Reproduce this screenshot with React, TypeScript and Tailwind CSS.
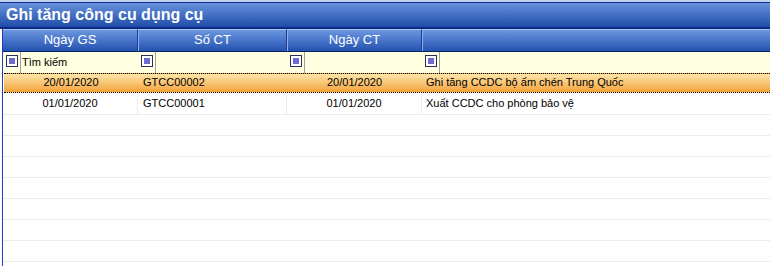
const rows = [
  { ngayGs: '20/01/2020', soCt: 'GTCC00002', ngayCt: '20/01/2020', dienGiai: 'Ghi tăng CCDC bộ ấm chén Trung Quốc' },
  { ngayGs: '01/01/2020', soCt: 'GTCC00001', ngayCt: '01/01/2020', dienGiai: 'Xuất CCDC cho phòng bảo vệ' },
];

function FilterBox() {
  return (
    <span className="flex h-[12px] w-[12px] shrink-0 items-center justify-center border border-[#2e2e5c] bg-white">
      <span className="h-[6px] w-[6px] bg-[#6b6bd2]" />
    </span>
  );
}

function FilterCell({ width, label }: { width?: string; label?: string }) {
  return (
    <div className={`flex h-full items-center ${width ?? 'flex-1'}`}>
      <div className="flex h-full items-center pl-[3px] pr-[2px] pb-[3px]">
        <FilterBox />
      </div>
      <div className="h-full border-l border-[#a0a0a0]" />
      <span className="pl-[1px] pb-[1px]">{label}</span>
    </div>
  );
}

export default function App() {
  return (
    <div className="h-[266px] w-[770px] overflow-hidden bg-white font-['Liberation_Sans',Arial,sans-serif] text-[11px] text-black">
      {/* Title bar */}
      <div className="bg-[#c3d1ee] pt-[2px]">
        <div className="flex h-[27px] items-center border-t border-b-2 border-t-[#0d2f8e] border-b-[#0a2a86] bg-linear-to-b from-[#6892dd] to-[#1f4ca8] pl-[6px] pb-[1px]">
          <span className="text-[16px] font-bold leading-none text-white">Ghi tăng công cụ dụng cụ</span>
        </div>
      </div>

      {/* Grid */}
      <div className="ml-[2px] h-full border-l border-[#1d3fc4]">
        {/* Column headers */}
        <div className="flex h-[23px] border-b border-[#0c2162] bg-linear-to-b from-[#6f99e2] to-[#2352b0] text-[13px] text-white">
          <div className="flex w-[135px] items-center justify-center border-t border-r border-t-[#a9c3f0] border-r-[#1b3a8c] pb-[1px]">Ngày GS</div>
          <div className="flex w-[149px] items-center justify-center border-t border-r border-l border-t-[#a9c3f0] border-r-[#1b3a8c] border-l-[#8fb0ea] pb-[1px]">Số CT</div>
          <div className="flex w-[135px] items-center justify-center border-t border-r border-l border-t-[#a9c3f0] border-r-[#1b3a8c] border-l-[#8fb0ea] pb-[1px]">Ngày CT</div>
          <div className="flex-1 border-t border-l border-t-[#a9c3f0] border-l-[#8fb0ea]" />
        </div>

        {/* Filter row */}
        <div className="flex h-[21px] bg-[#ffffe1]">
          <FilterCell width="w-[135px]" label="Tìm kiếm" />
          <FilterCell width="w-[149px]" />
          <FilterCell width="w-[135px]" />
          <FilterCell />
        </div>

        {/* Data rows */}
        {rows.map((r, i) => (
          <div
            key={r.soCt}
            className={
              i === 0
                ? 'ml-[1px] flex h-[20px] items-center border-y border-dotted border-black bg-linear-to-b from-[#fde6a8] to-[#f2a233] pb-[1px]'
                : 'flex h-[22px] items-center border-b border-[#ececec]'
            }
          >
            <div className={`flex h-full items-center justify-center ${i === 0 ? 'w-[134px]' : 'w-[135px] border-r border-[#ececec]'}`}>{r.ngayGs}</div>
            <div className={`flex h-full w-[149px] items-center pl-[5px] ${i === 0 ? '' : 'border-r border-[#ececec]'}`}>{r.soCt}</div>
            <div className={`flex h-full w-[135px] items-center justify-center ${i === 0 ? '' : 'border-r border-[#ececec]'}`}>{r.ngayCt}</div>
            <div className="flex h-full flex-1 items-center pl-[4px]">{r.dienGiai}</div>
          </div>
        ))}

        {/* Empty rows */}
        {Array.from({ length: 8 }).map((_, i) => (
          <div key={i} className="h-[21px] border-b border-[#ececec]" />
        ))}
      </div>
    </div>
  );
}
